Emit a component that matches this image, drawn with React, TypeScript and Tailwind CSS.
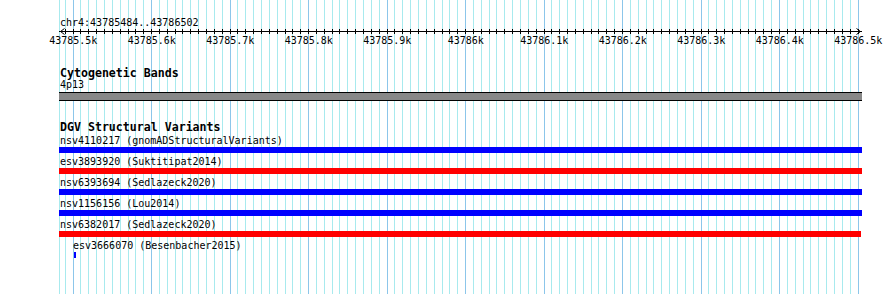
const ticks: { x: number; major: boolean }[] = [];
for (let k = -1; k <= 100; k++) {
  ticks.push({ x: Math.floor(73.05 + k * 7.85), major: k >= 0 && k % 10 === 0 });
}

const labels = [
  "43785.5k",
  "43785.6k",
  "43785.7k",
  "43785.8k",
  "43785.9k",
  "43786k",
  "43786.1k",
  "43786.2k",
  "43786.3k",
  "43786.4k",
  "43786.5k",
];

const variants = [
  { name: "nsv4110217 (gnomADStructuralVariants)", color: "bg-[#0000ff]", w: "w-[803px]" },
  { name: "esv3893920 (Suktitipat2014)", color: "bg-[#ff0000]", w: "w-[803px]" },
  { name: "nsv6393694 (Sedlazeck2020)", color: "bg-[#0000ff]", w: "w-[803px]" },
  { name: "nsv1156156 (Lou2014)", color: "bg-[#0000ff]", w: "w-[803px]" },
  { name: "nsv6382017 (Sedlazeck2020)", color: "bg-[#ff0000]", w: "w-[802px]" },
];

function GridLines() {
  return (
    <svg className="absolute inset-0" width={890} height={294}>
      <line x1={59.5} x2={59.5} y1={0} y2={294} stroke="#a8eaee" />
      {ticks.map((t) => (
        <line
          key={t.x}
          x1={t.x + 0.5}
          x2={t.x + 0.5}
          y1={0}
          y2={294}
          stroke={t.major ? "#8cc6ea" : "#a8eaee"}
        />
      ))}
    </svg>
  );
}

function Ruler() {
  return (
    <svg className="block" width={890} height={18}>
      <line x1={59} x2={862} y1={3.5} y2={3.5} stroke="#000" />
      <polyline points="64.5,0.5 60.5,3.5 64.5,6.5" fill="none" stroke="#000" />
      <polyline points="856.5,0.5 860.5,3.5 856.5,6.5" fill="none" stroke="#000" />
      {ticks.map((t) => (
        <line key={t.x} x1={t.x + 0.5} x2={t.x + 0.5} y1={1} y2={6} stroke="#000" />
      ))}
      {labels.map((l, i) => (
        <text
          key={l}
          x={73.3 + i * 78.5}
          y={16.2}
          textAnchor="middle"
          fontSize={10}
          fontFamily="'DejaVu Sans Mono', monospace"
          fill="#000"
        >
          {l}
        </text>
      ))}
    </svg>
  );
}

export default function App() {
  return (
    <div className="relative w-[890px] h-[294px] bg-white overflow-hidden text-black font-['DejaVu_Sans_Mono',monospace]">
      <GridLines />
      <div className="relative">
        {/* position header */}
        <div className="pt-[17px] pl-[60px] text-[10px] leading-[11px]">chr4:43785484..43786502</div>
        <Ruler />

        {/* Cytogenetic bands */}
        <div className="mt-[21px] pl-[60px] text-[11.6px] leading-[12px] font-bold">Cytogenetic Bands</div>
        <div className="mt-[1px] pl-[60px] text-[10px] leading-[10px]">4p13</div>
        <div className="mt-[2px] ml-[59px] w-[803px] h-[9px] border-y border-black bg-[#888888]" />

        {/* DGV */}
        <div className="mt-[20px] pl-[60px] text-[11.6px] leading-[12px] font-bold">DGV Structural Variants</div>
        <div className="mt-[2px] flex flex-col gap-[3px]">
          {variants.map((v) => (
            <div key={v.name}>
              <div className="pl-[60px] text-[10px] leading-[12px]">{v.name}</div>
              <div className={`ml-[59px] h-[6px] ${v.w} ${v.color}`} />
            </div>
          ))}
          <div>
            <div className="pl-[73px] text-[10px] leading-[12px]">esv3666070 (Besenbacher2015)</div>
            <div className="ml-[74px] w-[2px] h-[6px] bg-[#0000ff]" />
          </div>
        </div>
      </div>
    </div>
  );
}
